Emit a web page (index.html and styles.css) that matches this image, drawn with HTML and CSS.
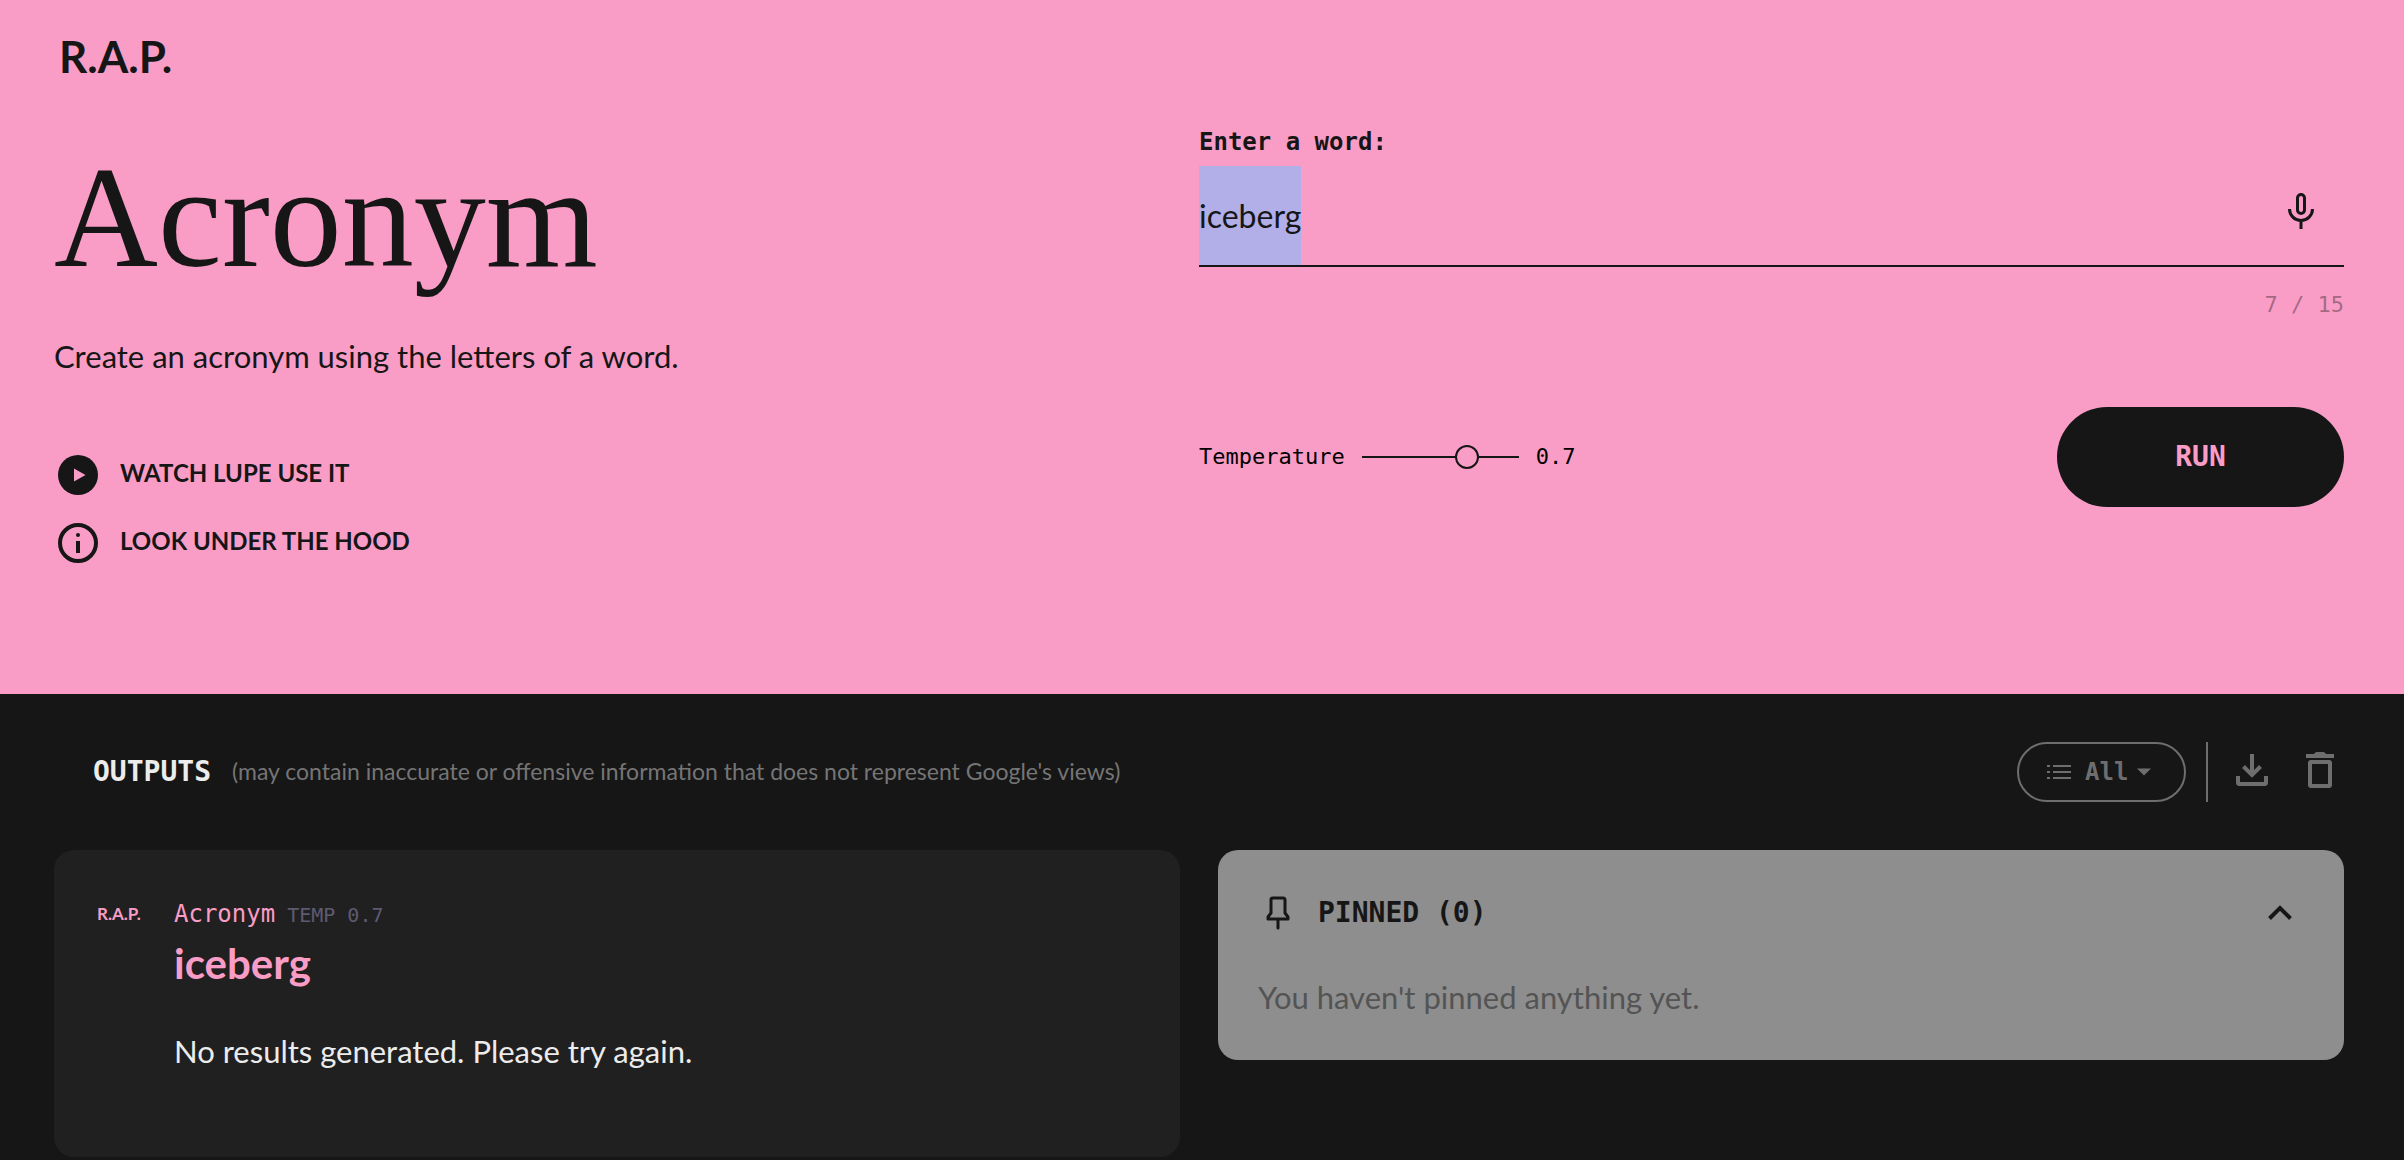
FILE: index.html
```
<!DOCTYPE html>
<html lang="en">
<head>
  <meta charset="utf-8">
  <meta name="viewport" content="width=device-width, initial-scale=1">
  <title>R.A.P. – Acronym</title>
  <link rel="stylesheet" href="styles.css">
</head>
<body>
  <main class="page">
    <section class="hero">
      <div class="intro">
        <a class="logo" href="#">R.A.P.</a>
        <h1 class="intro-title">Acronym</h1>
        <p class="intro-text">Create an acronym using the letters of a word.</p>
        <div class="intro-links">
          <button class="intro-link" type="button">
            <svg class="intro-icon" viewBox="0 0 40 40" aria-hidden="true">
              <circle cx="20" cy="20" r="20" fill="currentColor"/>
              <path d="M16 13.5v13L27.5 20z" fill="#fa9dc6"/>
            </svg>
            <span>WATCH LUPE USE IT</span>
          </button>
          <button class="intro-link" type="button">
            <svg class="intro-icon" viewBox="0 0 40 40" aria-hidden="true">
              <circle cx="20" cy="20" r="18" fill="none" stroke="currentColor" stroke-width="4"/>
              <circle cx="20" cy="12" r="2" fill="currentColor"/>
              <path d="M18 18h4v12h-4z" fill="currentColor"/>
            </svg>
            <span>LOOK UNDER THE HOOD</span>
          </button>
        </div>
      </div>

      <form class="tool">
        <label class="tool-label" for="word">Enter a word:</label>
        <div class="field">
          <input class="field-input" id="word" type="text" value="iceberg" maxlength="15" autocomplete="off" spellcheck="false">
          <button class="mic" type="button" aria-label="Speak a word">
            <svg width="26" height="36" viewBox="0 0 26 36" fill="none" stroke="currentColor" stroke-width="3" aria-hidden="true">
              <rect x="9.5" y="1.500" width="7" height="19" rx="3.500"/>
              <path d="M1.500 16a11.500 11.500 0 0 0 23 0M13 28v8"/>
            </svg>
          </button>
        </div>
        <p class="counter">7 / 15</p>
        <div class="controls">
          <div class="temperature">
            <label for="temperature">Temperature</label>
            <input class="slider" id="temperature" type="range" min="0" max="1" step="0.1" value="0.7">
            <output for="temperature">0.7</output>
          </div>
          <button class="run" type="submit">RUN</button>
        </div>
      </form>
    </section>

    <section class="outputs">
      <header class="toolbar">
        <h2 class="toolbar-title">OUTPUTS</h2>
        <p class="toolbar-note">(may contain inaccurate or offensive information that does not represent Google's views)</p>
        <div class="toolbar-actions">
          <div class="filter">
            <svg width="24" height="14" viewBox="0 0 24 14" fill="currentColor" aria-hidden="true">
              <path d="M0 0h3v2H0zM0 6h3v2H0zM0 12h3v2H0zM6 0h18v2H6zM6 6h18v2H6zM6 12h18v2H6z"/>
            </svg>
            <select class="filter-select" aria-label="Filter outputs">
              <option>All</option>
            </select>
            <svg width="16" height="8" viewBox="0 0 16 8" fill="currentColor" aria-hidden="true"><path d="M1 0.500h14L8 7.500z"/></svg>
          </div>
          <span class="divider"></span>
          <button class="icon-button" type="button" aria-label="Download">
            <svg width="32" height="32" viewBox="0 0 32 32" fill="none" stroke="currentColor" stroke-width="4" aria-hidden="true">
              <path d="M16 0v21M7.500 12.500L16 21l8.500-8.500"/>
              <path d="M2 22v6.500a1.500 1.500 0 0 0 1.500 1.500h25a1.500 1.500 0 0 0 1.500-1.500V22"/>
            </svg>
          </button>
          <button class="icon-button" type="button" aria-label="Delete all">
            <svg width="28" height="36" viewBox="0 0 28 36" aria-hidden="true">
              <path d="M0 2h8q1-2 3-2h6q2 0 3 2h8v4H0z" fill="currentColor"/>
              <rect x="4" y="10" width="20" height="24" rx="1" fill="none" stroke="currentColor" stroke-width="4"/>
            </svg>
          </button>
        </div>
      </header>

      <div class="cards">
        <article class="card result">
          <span class="result-logo">R.A.P.</span>
          <div class="result-body">
            <p class="result-meta"><span class="result-tool">Acronym</span><span class="result-temp">TEMP 0.7</span></p>
            <h3 class="result-word">iceberg</h3>
            <p class="result-text">No results generated. Please try again.</p>
          </div>
        </article>

        <aside class="card pinned">
          <div class="pinned-head">
            <svg width="24" height="34" viewBox="0 0 24 34" fill="none" stroke="currentColor" stroke-width="3" stroke-linejoin="round" stroke-linecap="round" aria-hidden="true">
              <path d="M7 2h10a2 2 0 0 1 2 2v13l3 4v2H2v-2l3-4V4a2 2 0 0 1 2-2zM12 23v9"/>
            </svg>
            <h2 class="pinned-title">PINNED (0)</h2>
            <button class="icon-button collapse" type="button" aria-label="Collapse pinned">
              <svg width="24" height="16" viewBox="0 0 24 16" fill="none" stroke="currentColor" stroke-width="4" aria-hidden="true"><path d="M1.500 13.500L12 3l10.500 10.500"/></svg>
            </button>
          </div>
          <p class="pinned-text">You haven't pinned anything yet.</p>
        </aside>
      </div>
    </section>
  </main>
  <script src="app.js"></script>
</body>
</html>
```
FILE: styles.css
```
:root {
  --pink: #fa9dc6;
  --ink: #161616;
  --muted: #6e6e6e;
  --sans: Lato, "Open Sans", sans-serif;
  --mono: "DejaVu Sans Mono", monospace;
}

* {
  box-sizing: border-box;
}

body,
h1,
h2,
h3,
p {
  margin: 0;
}

body {
  min-height: 100vh;
  background: var(--ink);
  color: var(--ink);
  font-family: var(--sans);
  font-size: 31px;
  line-height: 40px;
}

button,
input,
select {
  margin: 0;
  padding: 0;
  border: 0;
  background: none;
  color: inherit;
  font: inherit;
}

button {
  cursor: pointer;
}

svg {
  display: block;
  flex: none;
}

/* Hero */

.hero {
  display: grid;
  grid-template-columns: 1fr 1fr;
  padding: 0 60px 131px 54px;
  background: var(--pink);
}

.intro {
  display: flex;
  flex-direction: column;
  align-items: flex-start;
  padding-top: 32px;
}

.logo {
  margin-left: 5px;
  color: inherit;
  font-size: 44px;
  font-weight: 700;
  line-height: 48px;
  text-decoration: none;
}

.intro-title {
  margin-top: 58px;
  font-family: "Liberation Serif", serif;
  font-size: 144px;
  font-weight: 400;
  line-height: 160px;
}

.intro-text {
  margin-top: 38px;
}

.intro-links {
  display: flex;
  flex-direction: column;
  align-items: flex-start;
  gap: 28px;
  margin: 79px 0 0 4px;
}

.intro-link {
  display: flex;
  align-items: center;
  gap: 22px;
  font-size: 24px;
  font-weight: 700;
  line-height: 36px;
}

.intro-link span {
  padding-bottom: 4px;
}

.intro-icon {
  width: 40px;
  height: 40px;
}

.tool {
  display: flex;
  flex-direction: column;
  padding-top: 126px;
}

.tool-label {
  margin-bottom: 8px;
  font-family: var(--mono);
  font-size: 24px;
  font-weight: 700;
  line-height: 32px;
}

.field {
  display: flex;
  align-items: center;
  border-bottom: 2px solid var(--ink);
}

.field-input {
  flex: 1;
  min-width: 0;
  height: 99px;
  outline: 0;
  font-size: 32px;
  line-height: 99px;
}

.field-input::selection {
  background: rgba(177, 175, 232, 0.99);
  color: var(--ink);
}

.mic {
  margin-right: 30px;
  padding-bottom: 10px;
}

.counter {
  margin-top: 24px;
  color: rgba(22, 22, 22, 0.4);
  font-family: var(--mono);
  font-size: 22px;
  line-height: 28px;
  text-align: right;
}

.controls {
  display: flex;
  align-items: center;
  justify-content: space-between;
  margin-top: 88px;
}

.temperature {
  display: flex;
  align-items: center;
  gap: 17px;
  color: #000;
  font-family: var(--mono);
  font-size: 22px;
  line-height: 28px;
}

.slider {
  width: 157px;
  height: 24px;
  appearance: none;
  cursor: pointer;
}

.slider::-webkit-slider-runnable-track {
  height: 2px;
  background: var(--ink);
}

.slider::-webkit-slider-thumb {
  width: 24px;
  height: 24px;
  margin-top: -11px;
  appearance: none;
  border: 2px solid var(--ink);
  border-radius: 50%;
  background: var(--pink);
}

.run {
  width: 287px;
  height: 100px;
  border-radius: 50px;
  background: var(--ink);
  color: var(--pink);
  font-family: var(--mono);
  font-size: 28px;
  font-weight: 700;
}

/* Outputs */

.outputs {
  padding: 48px 60px 4px 54px;
}

.toolbar {
  display: flex;
  align-items: center;
  padding-left: 39px;
  color: var(--muted);
}

.toolbar-title {
  color: #ececec;
  font-family: var(--mono);
  font-size: 28px;
  font-weight: 700;
}

.toolbar-note {
  margin-left: 21px;
  padding-bottom: 3px;
  color: #757575;
  font-size: 23px;
}

.toolbar-actions {
  display: flex;
  align-items: center;
  margin-left: auto;
  padding-right: 10px;
}

.filter {
  display: flex;
  align-items: center;
  width: 169px;
  height: 60px;
  padding-left: 28px;
  border: 2px solid var(--muted);
  border-radius: 30px;
}

.filter-select {
  width: 44px;
  margin: 0 7px 0 14px;
  appearance: none;
  font-family: var(--mono);
  font-size: 24px;
  font-weight: 700;
  line-height: 32px;
  cursor: pointer;
}

.divider {
  width: 2px;
  height: 60px;
  margin: 0 28px 0 20px;
  background: var(--muted);
}

.toolbar .icon-button {
  padding-bottom: 4px;
}

.icon-button + .icon-button {
  margin-left: 38px;
}

.cards {
  display: grid;
  grid-template-columns: 1fr 1fr;
  align-items: start;
  gap: 38px;
  margin-top: 48px;
}

.card {
  border-radius: 20px;
}

.result {
  display: grid;
  grid-template-columns: 77px 1fr;
  padding: 48px 43px 86px;
  background: #202020;
}

.result-logo {
  color: var(--pink);
  font-size: 17px;
  font-weight: 700;
  line-height: 32px;
}

.result-meta {
  display: flex;
  align-items: baseline;
  gap: 12px;
  font-family: var(--mono);
  line-height: 32px;
}

.result-tool {
  color: var(--pink);
  font-size: 24px;
}

.result-temp {
  color: #5e5a72;
  font-size: 20px;
}

.result-word {
  margin-top: 8px;
  color: var(--pink);
  font-size: 42px;
  line-height: 48px;
}

.result-text {
  margin-top: 44px;
  color: #ececec;
}

.pinned {
  padding: 43px 40px;
  background: #8e8e8e;
}

.pinned-head {
  display: flex;
  align-items: center;
  padding: 0 12px 0 8px;
}

.pinned-title {
  margin-left: 28px;
  font-family: var(--mono);
  font-size: 28px;
  font-weight: 700;
}

.collapse {
  margin-left: auto;
}

.pinned-text {
  margin-top: 44px;
  color: #545454;
}
```
FILE: app.js
```
const word = document.getElementById("word");
const counter = document.querySelector(".counter");
const temperature = document.getElementById("temperature");
const reading = document.querySelector("output");

word.addEventListener("input", () => {
  counter.textContent = `${word.value.length} / ${word.maxLength}`;
});

temperature.addEventListener("input", () => {
  reading.textContent = temperature.value;
});

word.focus();
word.select();
```
